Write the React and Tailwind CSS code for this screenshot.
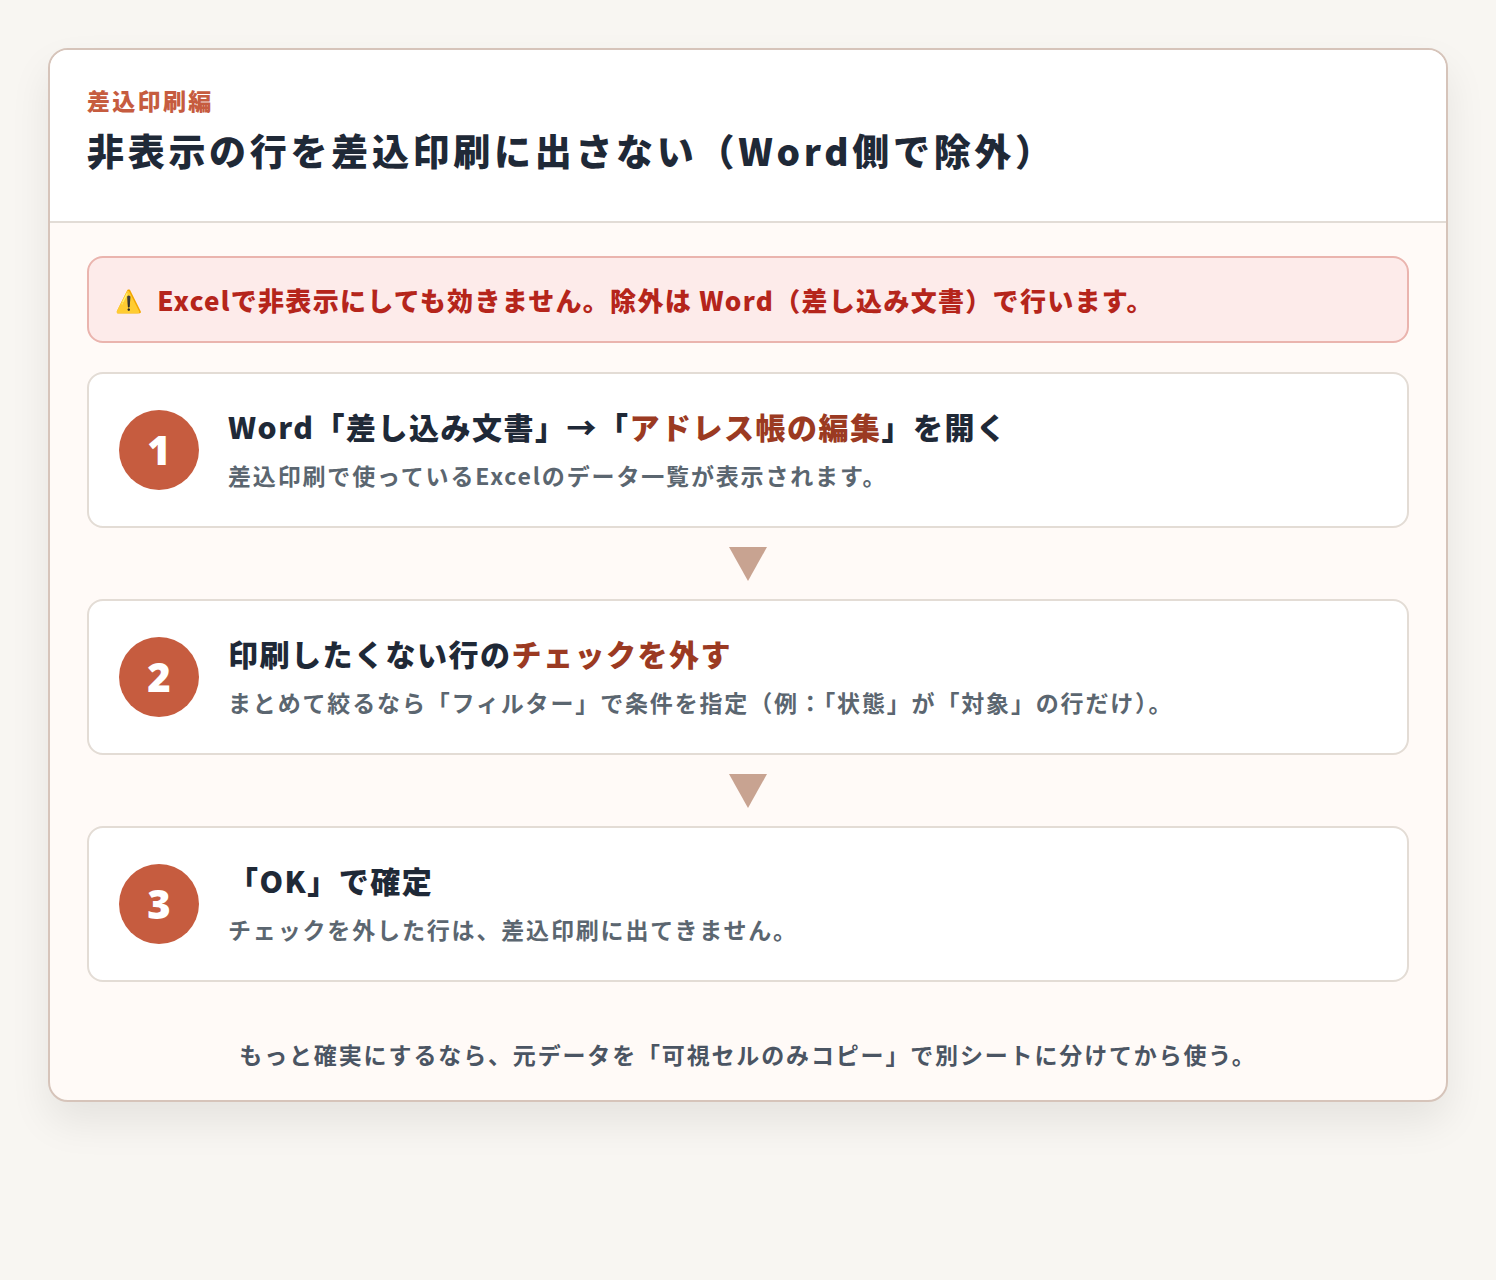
export default function App() {
  const font = { fontFamily: '"Noto Sans CJK JP", "Noto Sans", sans-serif' };
  const steps = [
    { n: "1", title: <>Word「差し込み文書」→「<span className="text-[#9b3a22]">アドレス帳の編集</span>」を開く</>, desc: "差込印刷で使っているExcelのデータ一覧が表示されます。" },
    { n: "2", title: <>印刷したくない行の<span className="text-[#9b3a22]">チェックを外す</span></>, desc: "まとめて絞るなら「フィルター」で条件を指定（例：「状態」が「対象」の行だけ）。" },
    { n: "3", title: <>「OK」で確定</>, desc: "チェックを外した行は、差込印刷に出てきません。" },
  ];
  return (
    <div className="min-h-[1280px] bg-[#f8f6f2] pt-[48px] px-[48px]" style={font}>
      <div className="w-[1400px] rounded-[20px] border-2 border-[#d6c4ba] bg-[#fffaf7] overflow-hidden shadow-[0_20px_40px_rgba(0,0,0,0.08)]">
        <div className="bg-white h-[173px] border-b-2 border-[#e2dcd6] pl-[37px] pt-[34px]">
          <div className="text-[23px] font-black tracking-[0.1em] text-[#c65c3f] leading-[32px]">差込印刷編</div>
          <div className="mt-[8px] text-[37px] font-black tracking-[0.1em] text-[#1f2937] leading-[52px]">非表示の行を差込印刷に出さない（Word側で除外）</div>
        </div>
        <div className="px-[37px] pt-[33px] pb-[30px]">
          <div className="h-[87px] rounded-[16px] border-2 border-[#eab4ae] bg-[#fdebea] flex items-center pl-[26px] gap-[14px] text-[26px] font-black tracking-[0.05em] text-[#b5251b]">
            <span className="text-[22px]">⚠️</span>
            <span>Excelで非表示にしても効きません。除外は Word（差し込み文書）で行います。</span>
          </div>
          <div className="mt-[29px] flex flex-col">
            {steps.map((s, i) => (
              <div key={s.n}>
                {i > 0 && (
                  <div className="h-[71px] flex items-center justify-center">
                    <svg width="38" height="34" viewBox="0 0 38 34"><polygon points="0,0 38,0 19,34" fill="#c8a391" /></svg>
                  </div>
                )}
                <div className="h-[156px] rounded-[16px] border-2 border-[#e3dcd5] bg-white flex items-center pl-[30px] gap-[29px]">
                  <div className="w-[80px] h-[80px] rounded-full bg-[#c65c3f] text-white flex items-center justify-center text-[40px] font-black shrink-0" style={{ fontFamily: '"Noto Sans", sans-serif' }}>{s.n}</div>
                  <div className="flex flex-col gap-[14px] -mt-[4px]">
                    <div className="text-[30px] font-black tracking-[0.05em] text-[#1f2937] leading-[40px]">{s.title}</div>
                    <div className="text-[23px] font-bold tracking-[0.08em] text-[#5b6670] leading-[30px]">{s.desc}</div>
                  </div>
                </div>
              </div>
            ))}
          </div>
          <div className="mt-[56px] text-center text-[23px] font-bold tracking-[0.08em] text-[#4b5563] leading-[32px]">もっと確実にするなら、元データを「可視セルのみコピー」で別シートに分けてから使う。</div>
        </div>
      </div>
    </div>
  );
}
